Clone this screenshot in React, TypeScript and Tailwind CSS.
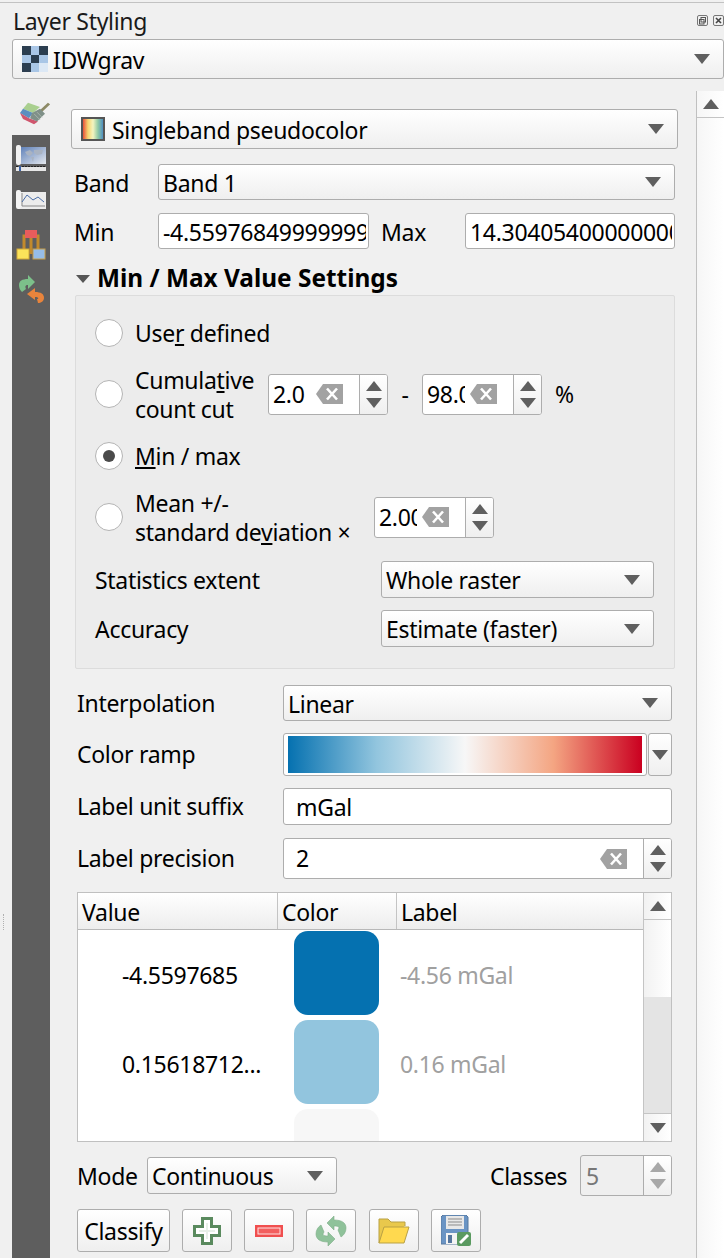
import type { ReactNode } from "react";

function Arrow({ up = false, color = "#5f5f5f" }: { up?: boolean; color?: string }) {
  return (
    <svg width="16" height="10" viewBox="0 0 16 10" className="shrink-0">
      <polygon points={up ? "8,0 16,10 0,10" : "0,0 16,0 8,10"} fill={color} />
    </svg>
  );
}

function ClearIcon() {
  return (
    <svg width="27" height="20" viewBox="0 0 27 20" className="shrink-0">
      <polygon points="7,0 27,0 27,20 7,20 0,10" fill="#a2a2a2" />
      <path d="M11 4.5 L21 15.5 M21 4.5 L11 15.5" stroke="#fff" strokeWidth="2.6" />
    </svg>
  );
}

function Combo({ text, className, icon }: { text: string; className: string; icon?: ReactNode }) {
  return (
    <div
      className={`flex items-center rounded-[3px] border border-[#adadad] bg-gradient-to-b from-white to-[#efefef] pl-[4px] pr-[13px] ${className}`}
    >
      {icon}
      <span className="flex-1 whitespace-nowrap">{text}</span>
      <Arrow />
    </div>
  );
}

function TextBox({ text, className }: { text: string; className: string }) {
  return (
    <div
      className={`flex items-center overflow-hidden whitespace-nowrap rounded-[3px] border border-[#adadad] bg-white pl-[4px] pr-[2px] ${className}`}
    >
      <span className="block w-full overflow-hidden">{text}</span>
    </div>
  );
}

function SpinButtons({ disabled = false }: { disabled?: boolean }) {
  const color = disabled ? "#a8a8a8" : "#5f5f5f";
  return (
    <div className="flex w-[28px] shrink-0 flex-col items-center justify-center gap-[7px] border-l border-[#adadad] bg-gradient-to-b from-white to-[#efefef]">
      <Arrow up color={color} />
      <Arrow color={color} />
    </div>
  );
}

function SpinBox({ text, className }: { text: string; className: string }) {
  return (
    <div className={`flex h-[41px] overflow-hidden rounded-[3px] border border-[#adadad] bg-white ${className}`}>
      <div className="flex flex-1 items-center pl-[4px]">
        <div className="mr-[5px] w-[38px] shrink-0 overflow-hidden whitespace-nowrap">{text}</div>
        <ClearIcon />
      </div>
      <SpinButtons />
    </div>
  );
}

function Radio({ checked = false }: { checked?: boolean }) {
  return (
    <div className="mr-[12px] flex h-[28px] w-[28px] shrink-0 items-center justify-center rounded-full border border-[#b4b4b4] bg-white">
      {checked && <div className="h-[12px] w-[12px] rounded-full bg-[#4a4a4a]" />}
    </div>
  );
}

function BrushIcon() {
  return (
    <svg width="30" height="24" viewBox="0 0 30 28" preserveAspectRatio="none">
      <polygon points="8,2 20,7 13,14 3,9" fill="#a9cf8f" />
      <polygon points="3,9 13,14 9,20 0,14" fill="#5c8ec0" />
      <polygon points="0,14 9,20 18,24 14,27 3,21" fill="#d0566e" />
      <path d="M18 15 L29 3" stroke="#8d8a66" strokeWidth="3" />
      <polygon points="12,14 20,9 25,15 17,24 10,20" fill="#7f9088" />
      <path d="M14 15 L20 22 M17 13 L22 19" stroke="#a7b3ac" strokeWidth="1" />
    </svg>
  );
}

function MapIcon() {
  return (
    <svg width="30" height="27" viewBox="0 0 30 27">
      <defs>
        <linearGradient id="mapFill" x1="0" y1="0" x2="1" y2="1">
          <stop offset="0" stopColor="#5e80b8" />
          <stop offset="1" stopColor="#e4e8ee" />
        </linearGradient>
      </defs>
      <rect x="4" y="2" width="26" height="17" fill="url(#mapFill)" />
      <path d="M9 7 L14 5 L17 8 L14 11 L11 10 Z M18 5 L27 5 L26 9 L21 10 L18 8 Z M15 12 L18 12 L17 17 Z" fill="#a9b3c2" />
      <rect x="0" y="0" width="5" height="20" rx="2" fill="#f1f1f1" />
      <rect x="0" y="22" width="30" height="4" fill="#e6e6e6" />
      <path d="M0 21.5 H30" stroke="#222" strokeWidth="1" strokeDasharray="2 1" />
      <rect x="3" y="21" width="2" height="5" fill="#3a62a8" />
    </svg>
  );
}

function GraphIcon() {
  return (
    <svg width="30" height="20" viewBox="0 0 30 20">
      <rect x="3" y="2" width="27" height="17" fill="#ececec" />
      <rect x="0" y="0" width="5" height="19" rx="2" fill="#f4f4f4" />
      <path d="M6 3 V16 H29" stroke="#8a8a8a" strokeWidth="1" fill="none" />
      <path d="M6 12 L11 5 L17 10 L22 7 L28 12" stroke="#4a6ea8" strokeWidth="1" fill="none" />
    </svg>
  );
}

function TreeIcon() {
  return (
    <svg width="30" height="31" viewBox="0 0 30 31">
      <path d="M8 19 V6 H22 V19 M15 6 V24" stroke="#c28a2c" strokeWidth="3" fill="none" />
      <rect x="9" y="0" width="12" height="8" fill="#e85c5c" />
      <rect x="1" y="19" width="12" height="10" fill="#fbe35a" stroke="#d2a838" />
      <rect x="17" y="19" width="12" height="10" fill="#96bde8" stroke="#c9a04a" />
    </svg>
  );
}

function SwapIcon() {
  return (
    <svg width="26" height="28" viewBox="0 0 26 28">
      <path d="M16 7 L9 0 V4 C3 4 0 6 0 10 C0 13 1 15 3 17 L7 14 C6 12 6 10 9 10 V14 Z" fill="#7cc08a" />
      <path d="M8 19 L16 13 V17 C22 17 25 19 25 23 C25 26 22 28 19 28 L18 24 C20 24 20 22 16 22 V25 Z" fill="#e8843c" />
    </svg>
  );
}

function RefreshIcon() {
  return (
    <svg width="32" height="32" viewBox="0 0 32 32">
      <path d="M12 8 L19 1 V5 C27 5 31 8 31 13 C31 17 29 20 26 22 L23 15 C25 12 24 11 19 11 V15 Z" fill="#8fc29a" stroke="#7cad86" strokeWidth="0.6" />
      <path d="M12 8 L19 1 V5 C27 5 31 8 31 13 C31 17 29 20 26 22 L23 15 C25 12 24 11 19 11 V15 Z" fill="#8fc29a" stroke="#7cad86" strokeWidth="0.6" transform="rotate(180 16 16)" />
    </svg>
  );
}

function FolderIcon() {
  return (
    <svg width="32" height="26" viewBox="0 0 32 26">
      <path d="M1 25 V1 H10 L13 4 H27 V8" fill="#e9c84c" stroke="#b9a145" />
      <polygon points="1,25 6,9 31,9 26,25" fill="#ffd94f" stroke="#b9a145" />
    </svg>
  );
}

function SaveIcon() {
  return (
    <svg width="30" height="31" viewBox="0 0 30 31">
      <path d="M2 0 H25 L27 2 V29 H0 V2 Z" fill="#6a94c4" stroke="#56789e" />
      <rect x="5" y="1" width="18" height="13" fill="#e8e8e8" />
      <path d="M7 4 H21 M7 7 H21 M7 10 H21" stroke="#8b8b8b" strokeWidth="1" />
      <rect x="5" y="18" width="15" height="11" fill="#f3f3f3" />
      <rect x="7" y="20" width="4" height="8" fill="#55769e" />
      <rect x="16" y="17" width="14" height="14" rx="2" fill="#5a9a60" />
      <path d="M19 28 L27 20" stroke="#fff" strokeWidth="3" />
    </svg>
  );
}

function IconButton({ children, className = "" }: { children: ReactNode; className?: string }) {
  return (
    <div
      className={`flex h-[43px] w-[50px] items-center justify-center rounded-[3px] border border-[#adadad] bg-gradient-to-b from-white to-[#efefef] ${className}`}
    >
      {children}
    </div>
  );
}

function ColorRow({ value, color, label }: { value: string; color: string; label: string }) {
  return (
    <div className="flex h-[89px] shrink-0">
      <div className="flex w-[200px] items-center pl-[44px] pt-[2px]">{value}</div>
      <div className="w-[119px] pl-[16px] pt-px">
        <div className="h-[84px] w-[85px] rounded-[14px]" style={{ backgroundColor: color }} />
      </div>
      <div className="flex flex-1 items-center pl-[3px] pt-[2px] text-[#a0a0a0]">{label}</div>
    </div>
  );
}

function HeaderCell({ text, className }: { text: string; className: string }) {
  return <div className={`flex items-center border-r border-[#c4c4c4] pl-[4px] pt-[2px] ${className}`}>{text}</div>;
}

function TableScrollbar() {
  return (
    <div className="flex w-[28px] shrink-0 flex-col border-l border-[#c4c4c4] bg-gradient-to-r from-[#f2f2f2] to-white">
      <div className="flex h-[27px] shrink-0 items-center justify-center border-b border-[#c4c4c4]">
        <Arrow up />
      </div>
      <div className="flex-1" />
      <div className="h-[116px] shrink-0 bg-[#e4e4e4]" />
      <div className="flex h-[28px] shrink-0 items-center justify-center border-t border-[#c4c4c4]">
        <Arrow />
      </div>
    </div>
  );
}

export default function App() {
  return (
    <div
      className="h-[1258px] w-[724px] overflow-hidden bg-[#f0f0f0] pt-[2px] text-[23px] leading-[29px] tracking-[-0.3px] text-black [&_span]:pt-[2px]"
      style={{ fontFamily: '"Noto Sans", sans-serif' }}
    >
      <div className="border-t border-[#c2c2c2]">
        {/* dock title */}
        <div className="flex h-[36px] items-center justify-between pl-[13px]">
          <div className="text-[#1a1a1a]">Layer Styling</div>
          <div className="mb-[2px] flex gap-[5px]">
            <svg width="11" height="11" viewBox="0 0 11 11">
              <rect x="0.5" y="0.5" width="10" height="10" rx="1.5" fill="none" stroke="#777" />
              <rect x="4" y="2.5" width="4.5" height="4.5" fill="none" stroke="#555" />
              <rect x="2.5" y="4.5" width="4.5" height="4.5" fill="none" stroke="#555" />
            </svg>
            <svg width="11" height="11" viewBox="0 0 11 11">
              <rect x="0.5" y="0.5" width="10" height="10" rx="1.5" fill="none" stroke="#777" />
              <path d="M3 3 L8 8 M8 3 L3 8" stroke="#444" strokeWidth="1.6" />
            </svg>
          </div>
        </div>

        <Combo
          text="IDWgrav"
          className="ml-[12px] h-[40px] w-[712px] pl-[9px]"
          icon={
            <div className="mr-[5px] grid h-[26px] w-[26px] shrink-0 grid-cols-3 grid-rows-3">
              <div className="bg-[#2c3e50]" />
              <div className="bg-[#a9c6e6]" />
              <div className="bg-[#2c3e50]" />
              <div className="bg-[#a9c6e6]" />
              <div className="bg-[#2c3e50]" />
              <div className="bg-[#a9c6e6]" />
              <div className="bg-[#2c3e50]" />
              <div className="bg-[#a9c6e6]" />
              <div className="bg-[#dce8f5]" />
            </div>
          }
        />

        <div className="flex h-[1179px]">
          {/* splitter handle */}
          <div className="flex w-[12px] shrink-0 justify-start pl-[3px] pt-[835px]">
            <div className="h-[16px] w-px border-l border-dotted border-[#b0b0b0]" />
          </div>

          {/* page tabs */}
          <div className="flex w-[38px] shrink-0 flex-col">
            <div className="flex h-[56px] shrink-0 items-end justify-end pb-[10px]">
              <BrushIcon />
            </div>
            <div className="flex flex-1 flex-col items-start bg-[#5e5e5e] pl-[4px] pt-[10px]">
              <MapIcon />
              <div className="mt-[18px]">
                <GraphIcon />
              </div>
              <div className="mt-[20px]">
                <TreeIcon />
              </div>
              <div className="mt-[14px] pl-[3px]">
                <SwapIcon />
              </div>
            </div>
          </div>

          {/* panel body */}
          <div className="w-[646px] shrink-0">
            <Combo
              text="Singleband pseudocolor"
              className="ml-[21px] mt-[30px] h-[40px] w-[607px] pl-[9px]"
              icon={
                <div
                  className="mr-[7px] h-[24px] w-[24px] shrink-0 border-[2px] border-[#555]"
                  style={{ background: "linear-gradient(to right, #e8503a, #f7d56f, #f4f4c0, #8fc9a6, #4f8fc0)" }}
                />
              }
            />

            <div className="ml-[24px] mt-[15px] flex h-[36px] items-center">
              <span className="w-[84px]">Band</span>
              <Combo text="Band 1" className="h-full w-[517px]" />
            </div>

            <div className="ml-[24px] mt-[13px] flex h-[36px] items-center">
              <span className="w-[84px]">Min</span>
              <TextBox text="-4.55976849999999" className="h-full w-[211px]" />
              <span className="ml-[12px] w-[84px]">Max</span>
              <TextBox text="14.304054000000001" className="h-full w-[210px]" />
            </div>

            <div className="ml-[26px] flex h-[46px] items-center gap-[7px] pt-[11px] text-[24.4px] font-bold tracking-normal">
              <svg width="14" height="8" viewBox="0 0 14 8" className="mt-[2px] shrink-0">
                <polygon points="0,0 14,0 7,8" fill="#555" />
              </svg>
              <div className="whitespace-nowrap">Min / Max Value Settings</div>
            </div>

            {/* min / max group */}
            <div className="ml-[25px] h-[374px] w-[600px] rounded-[2px] border border-[#dcdcdc] bg-[#ececec] pl-[19px] pt-[23px]">
              <div className="flex h-[28px] items-center">
                <Radio />
                <div>
                  Use<span className="underline">r</span> defined
                </div>
              </div>

              <div className="mt-[16px] flex h-[62px] items-center">
                <Radio />
                <div className="w-[133px] shrink-0 pt-[2px]">
                  Cumula<span className="underline">t</span>ive
                  <br />
                  count cut
                </div>
                <SpinBox text="2.0" className="w-[120px] shrink-0" />
                <div className="w-[34px] shrink-0 text-center">-</div>
                <SpinBox text="98.0" className="w-[120px] shrink-0" />
                <div className="ml-[13px]">%</div>
              </div>

              <div className="mt-[17px] flex h-[28px] items-center">
                <Radio checked />
                <div>
                  <span className="underline">M</span>in / max
                </div>
              </div>

              <div className="mt-[16px] flex h-[62px] items-center">
                <Radio />
                <div className="w-[239px] shrink-0 whitespace-nowrap pt-[2px]">
                  Mean +/-
                  <br />
                  standard de<span className="underline">v</span>iation ×
                </div>
                <SpinBox text="2.00" className="w-[120px] shrink-0" />
              </div>

              <div className="mt-[13px] flex h-[37px] items-center">
                <span className="w-[286px]">Statistics extent</span>
                <Combo text="Whole raster" className="h-full w-[273px]" />
              </div>

              <div className="mt-[12px] flex h-[37px] items-center">
                <span className="w-[286px]">Accuracy</span>
                <Combo text="Estimate (faster)" className="h-full w-[273px]" />
              </div>
            </div>

            <div className="ml-[27px] w-[595px]">
              <div className="mt-[16px] flex h-[36px] items-center">
                <div className="w-[206px]">Interpolation</div>
                <Combo text="Linear" className="h-full w-[389px]" />
              </div>

              <div className="mt-[12px] flex h-[43px] items-center">
                <div className="w-[206px]">Color ramp</div>
                <div className="h-full w-[365px] rounded-[3px] border border-[#adadad] bg-white px-[4px] py-[2px]">
                  <div
                    className="h-full w-full"
                    style={{
                      background:
                        "linear-gradient(to right, #0571b0 0%, #92c5de 25%, #f7f7f7 50%, #f4a582 75%, #ca0020 100%)",
                    }}
                  />
                </div>
                <div className="ml-px flex h-full w-[24px] items-center justify-center rounded-[3px] border border-[#adadad] bg-gradient-to-b from-white to-[#efefef]">
                  <Arrow />
                </div>
              </div>

              <div className="mt-[12px] flex h-[37px] items-center">
                <div className="w-[206px]">Label unit suffix</div>
                <TextBox text="mGal" className="h-full w-[389px] pl-[12px]" />
              </div>

              <div className="mt-[13px] flex h-[41px] items-center">
                <div className="w-[206px]">Label precision</div>
                <div className="flex h-full w-[389px] overflow-hidden rounded-[3px] border border-[#adadad] bg-white">
                  <div className="flex flex-1 items-center justify-between pl-[12px] pr-[16px]">
                    <div>2</div>
                    <ClearIcon />
                  </div>
                  <SpinButtons />
                </div>
              </div>

              {/* color table */}
              <div className="mt-[13px] flex h-[250px] border border-[#c0c0c0] bg-white">
                <div className="flex w-[565px] flex-col overflow-hidden">
                  <div className="flex h-[37px] shrink-0 border-b border-[#b8b8b8] bg-gradient-to-b from-white to-[#ededed]">
                    <HeaderCell text="Value" className="w-[200px]" />
                    <HeaderCell text="Color" className="w-[119px]" />
                    <div className="flex flex-1 items-center pl-[4px] pt-[2px]">Label</div>
                  </div>
                  <ColorRow value="-4.5597685" color="#0571b0" label="-4.56 mGal" />
                  <ColorRow value="0.15618712..." color="#92c5de" label="0.16 mGal" />
                  <ColorRow value="" color="#f7f7f7" label="" />
                </div>
                <TableScrollbar />
              </div>

              <div className="mt-[13px] flex h-[41px] items-center">
                <span className="w-[70px]">Mode</span>
                <Combo text="Continuous" className="h-[37px] w-[190px]" />
                <span className="ml-[153px] w-[90px]">Classes</span>
                <div className="flex h-full w-[92px] overflow-hidden rounded-[3px] border border-[#adadad] bg-[#efefef]">
                  <div className="flex flex-1 items-center pl-[5px] pt-[2px] text-[#777]">5</div>
                  <SpinButtons disabled />
                </div>
              </div>

              <div className="mt-[13px] flex h-[43px] items-center gap-[12px]">
                <div className="flex h-full w-[93px] items-center justify-center rounded-[3px] border border-[#adadad] bg-gradient-to-b from-white to-[#efefef] pt-[2px]">
                  Classify
                </div>
                <IconButton>
                  <svg width="28" height="28" viewBox="0 0 28 28">
                    <polygon
                      points="9.5,1.5 18.5,1.5 18.5,9.5 26.5,9.5 26.5,18.5 18.5,18.5 18.5,26.5 9.5,26.5 9.5,18.5 1.5,18.5 1.5,9.5 9.5,9.5"
                      fill="#fff"
                      stroke="#5a8a5e"
                      strokeWidth="3"
                    />
                    <path d="M14 6 V22 M6 14 H22" stroke="#e8f0e8" strokeWidth="2" />
                  </svg>
                </IconButton>
                <IconButton>
                  <svg width="28" height="12" viewBox="0 0 28 12">
                    <rect x="1.5" y="1.5" width="25" height="9" fill="#f25f5f" stroke="#f04f4f" strokeWidth="3" />
                    <rect x="3" y="3" width="22" height="6" fill="#f25f5f" stroke="#ffe3e3" strokeWidth="1" />
                  </svg>
                </IconButton>
                <IconButton>
                  <RefreshIcon />
                </IconButton>
                <IconButton className="ml-px">
                  <FolderIcon />
                </IconButton>
                <IconButton>
                  <SaveIcon />
                </IconButton>
              </div>
            </div>
          </div>

          {/* panel scrollbar */}
          <div className="mt-[12px] flex w-[28px] shrink-0 flex-col border-l border-[#c0c0c0] bg-gradient-to-r from-[#f6f6f6] to-white">
            <div className="flex h-[27px] shrink-0 items-center justify-center border-b border-[#c4c4c4]">
              <Arrow up />
            </div>
          </div>
        </div>
      </div>
    </div>
  );
}
